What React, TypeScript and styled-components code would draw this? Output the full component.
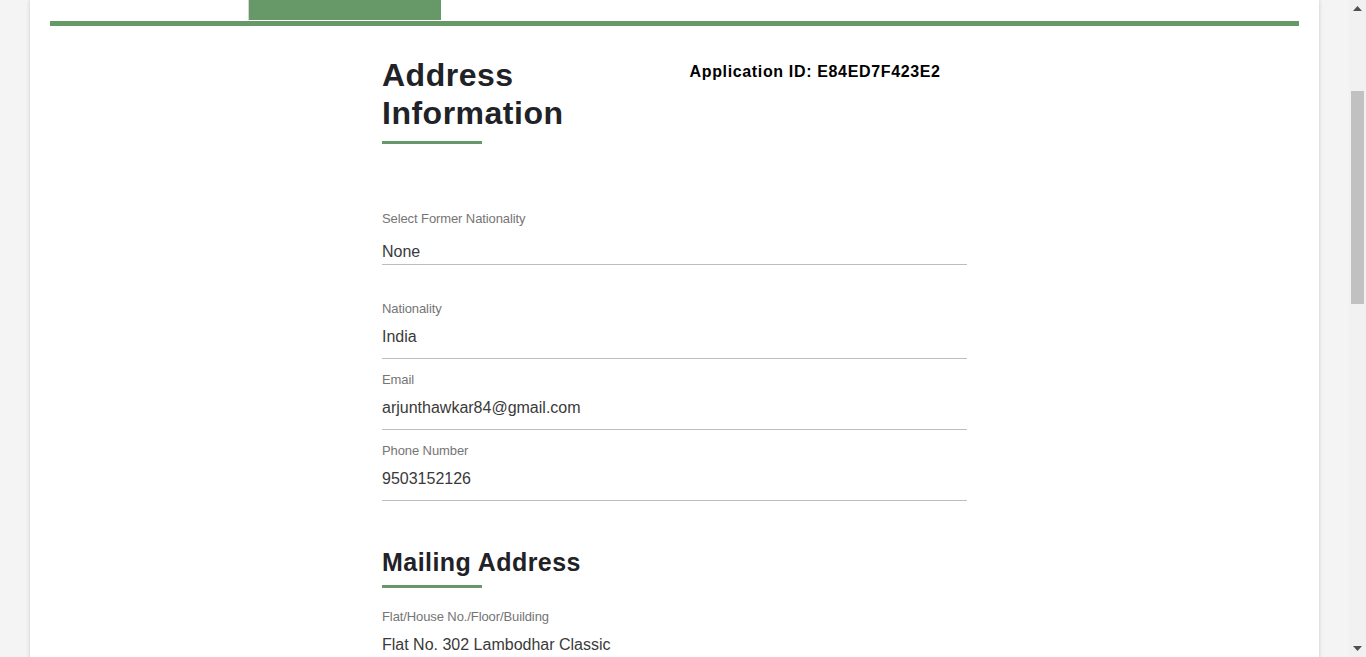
import React from "react";
import styled, { createGlobalStyle } from "styled-components";

const GREEN = "#679868";

const GlobalStyle = createGlobalStyle`
  html, body {
    margin: 0;
    padding: 0;
    background: #f4f4f4;
    overflow: hidden;
  }
  body {
    font-family: "Liberation Sans", Arial, sans-serif;
  }
  * { box-sizing: border-box; }
`;

const Window = styled.div`
  display: flex;
  height: 100vh;
  overflow: hidden;
`;

const Page = styled.div`
  flex: 1;
  min-width: 0;
  overflow: hidden;
`;

const ScrollBar = styled.div`
  width: 17px;
  flex: none;
  display: flex;
  flex-direction: column;
  background: #f1f1f1;
`;

const ScrollArrow = styled.div`
  height: 17px;
  display: flex;
  align-items: center;
  justify-content: center;
`;

const ScrollTrack = styled.div`
  flex: 1;
  padding: 0 2px;
`;

const ScrollThumb = styled.div`
  margin-top: 74px;
  height: 213px;
  background: #c1c1c1;
`;

const Panel = styled.div`
  margin: 0 30px;
  background: #ffffff;
  box-shadow: 0 0 4px rgba(0, 0, 0, 0.18);
  padding: 0 20px 80px;
  min-height: 1900px;
`;

const TabBar = styled.div`
  display: flex;
  border-bottom: 5px solid ${GREEN};
`;

const Tab = styled.div<{ $active?: boolean; $width: number }>`
  width: ${(p) => p.$width}px;
  height: 21px;
  border-bottom: 1px solid #ffffff;
  border-left: ${(p) => (p.$active ? "1px solid #d6d6d6" : "none")};
  background: ${(p) => (p.$active ? GREEN : "#ffffff")};
  background-clip: padding-box;
`;

const Content = styled.div`
  width: 585px;
  margin: 0 auto;
`;

const HeaderRow = styled.div`
  display: grid;
  grid-template-columns: 1fr 1fr;
  margin-top: 30px;
`;

const Title = styled.h1<{ $size: number; $spacing: number }>`
  margin: 0;
  font-size: ${(p) => p.$size}px;
  line-height: 1.2;
  font-weight: 700;
  letter-spacing: ${(p) => p.$spacing}px;
  color: #1f2226;
`;

const Underline = styled.div<{ $gap: number }>`
  width: 100px;
  height: 3px;
  margin-top: ${(p) => p.$gap}px;
  background: ${GREEN};
`;

const AppId = styled.div`
  margin-top: 7px;
  padding-left: 15px;
  font-size: 16px;
  font-weight: 700;
  letter-spacing: 0.65px;
  color: #000;
`;

const Field = styled.div<{ $top: number; $select?: boolean }>`
  margin-top: ${(p) => p.$top}px;
  padding-top: 1px;
  padding-bottom: ${(p) => (p.$select ? 2 : 11)}px;
  border-bottom: 1px solid #bdbdbd;
`;

const Label = styled.div`
  font-size: 13px;
  line-height: 16px;
  letter-spacing: -0.1px;
  color: #757575;
`;

const Value = styled.div<{ $select?: boolean }>`
  margin-top: ${(p) => (p.$select ? 15 : 10)}px;
  font-size: 16px;
  line-height: 20px;
  color: #3a3a3a;
`;

const Section = styled.div`
  margin-top: 46px;
`;

type F = { label: string; value: string };

const contact: F[] = [
  { label: "Nationality", value: "India" },
  { label: "Email", value: "arjunthawkar84@gmail.com" },
  { label: "Phone Number", value: "9503152126" },
];

const mailing: F[] = [
  { label: "Flat/House No./Floor/Building", value: "Flat No. 302 Lambodhar Classic" },
  { label: "Street/Road/Lane", value: "Ganesh Nagar" },
  { label: "Area/Locality", value: "Dhayari" },
  { label: "City/Town/Village", value: "Pune" },
  { label: "District", value: "Pune" },
  { label: "State", value: "Maharashtra" },
  { label: "Pin Code", value: "411041" },
  { label: "Country", value: "India" },
];

const permanent: F[] = [
  { label: "Flat/House No./Floor/Building", value: "Flat No. 302 Lambodhar Classic" },
  { label: "Street/Road/Lane", value: "Ganesh Nagar" },
  { label: "Area/Locality", value: "Dhayari" },
  { label: "City/Town/Village", value: "Pune" },
  { label: "State", value: "Maharashtra" },
  { label: "Pin Code", value: "411041" },
];

const FieldList = ({ items, firstTop }: { items: F[]; firstTop: number }) => (
  <>
    {items.map((f, i) => (
      <Field key={f.label + i} $top={i === 0 ? firstTop : 12}>
        <Label>{f.label}</Label>
        <Value>{f.value}</Value>
      </Field>
    ))}
  </>
);

const Arrow = ({ up }: { up?: boolean }) => (
  <svg width="9" height="5" viewBox="0 0 9 5">
    <path d={up ? "M0 5 L4.5 0 L9 5 Z" : "M0 0 L9 0 L4.5 5 Z"} fill="#505050" />
  </svg>
);

export default function App() {
  return (
    <>
      <GlobalStyle />
      <Window>
        <Page>
          <Panel>
            <TabBar>
              <Tab $width={198} />
              <Tab $width={193} $active />
            </TabBar>
            <Content>
              <HeaderRow>
                <div>
                  <Title $size={32} $spacing={0.5}>
                    Address Information
                  </Title>
                  <Underline $gap={8} />
                </div>
                <AppId>Application ID: E84ED7F423E2</AppId>
              </HeaderRow>

              <Field $top={66} $select>
                <Label>Select Former Nationality</Label>
                <Value $select>None</Value>
              </Field>
              <FieldList items={contact} firstTop={35} />

              <Section>
                <Title $size={25} $spacing={0.45}>
                  Mailing Address
                </Title>
                <Underline $gap={8} />
              </Section>
              <FieldList items={mailing} firstTop={20} />

              <Section>
                <Title $size={25} $spacing={0.45}>
                  Permanent Address
                </Title>
                <Underline $gap={8} />
              </Section>
              <FieldList items={permanent} firstTop={20} />
            </Content>
          </Panel>
        </Page>
        <ScrollBar>
          <ScrollArrow>
            <Arrow up />
          </ScrollArrow>
          <ScrollTrack>
            <ScrollThumb />
          </ScrollTrack>
          <ScrollArrow>
            <Arrow />
          </ScrollArrow>
        </ScrollBar>
      </Window>
    </>
  );
}
